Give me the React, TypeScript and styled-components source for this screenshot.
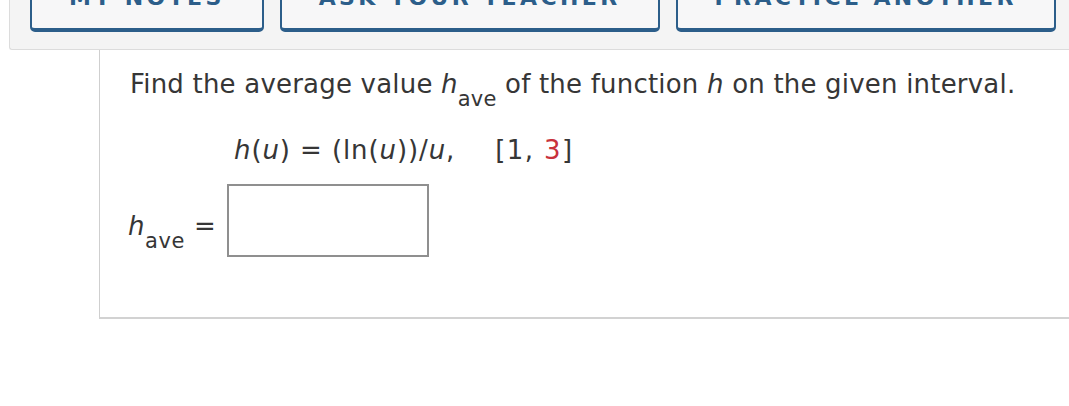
import styled, { createGlobalStyle } from "styled-components";

const GlobalStyle = createGlobalStyle`
  html, body {
    margin: 0;
    padding: 0;
    background: #ffffff;
    overflow: hidden;
  }
  body {
    font-family: "DejaVu Sans", Verdana, sans-serif;
    color: #363636;
  }
`;

const Page = styled.div`
  margin-top: -53px;
  padding-left: 9px;
  width: 1200px;
`;

const Toolbar = styled.div`
  display: flex;
  gap: 16px;
  padding: 16px 0 17px 20px;
  background: #f4f4f4;
  border-left: 1px solid #dcdcdc;
  border-bottom: 1px solid #dcdcdc;
  border-bottom-left-radius: 3px;
`;

const ToolButton = styled.button`
  font-family: "DejaVu Sans", Verdana, sans-serif;
  font-weight: bold;
  font-size: 22px;
  line-height: 26px;
  letter-spacing: 3.4px;
  text-transform: uppercase;
  color: #2c5e8a;
  background: #f7f7f8;
  border: 2px solid #2c5e8a;
  border-bottom-width: 4px;
  border-radius: 5px;
  padding: 20px 37px 17px;
  white-space: nowrap;
`;

const QuestionPanel = styled.div`
  margin-left: 90px;
  padding: 17px 0 60px 30px;
  border-left: 1px solid #cfcfcf;
  border-bottom: 2px solid #d2d2d2;
  box-shadow: 0 1px 0 #f2f2f2;
`;

const Prompt = styled.p`
  margin: 0;
  font-size: 26px;
  line-height: 34px;
  letter-spacing: 0.2px;
  white-space: nowrap;
`;

const Equation = styled(Prompt)`
  margin-top: 32px;
  padding-left: 104px;
  letter-spacing: 0.9px;
`;

const Var = styled.i`
  font-style: italic;
`;

const Sub = styled.span`
  font-size: 21px;
  line-height: 0;
  vertical-align: -13px;
`;

const Interval = styled.span`
  margin-left: 40px;
  letter-spacing: 1.4px;
`;

const Red = styled.span`
  color: #c8323c;
`;

const AnswerRow = styled.div`
  display: flex;
  align-items: flex-start;
  margin-top: 17px;
  margin-left: -2px;
`;

const AnswerLabel = styled.span`
  margin-top: 25px;
  font-size: 26px;
  line-height: 34px;
  letter-spacing: 0.6px;
  white-space: pre;
`;

const AnswerBox = styled.div`
  margin-left: 11px;
  width: 198px;
  height: 69px;
  border: 2px solid #8f8f8f;
  background: #ffffff;
`;

export default function App() {
  return (
    <>
      <GlobalStyle />
      <Page>
        <Toolbar>
          <ToolButton>My Notes</ToolButton>
          <ToolButton>Ask Your Teacher</ToolButton>
          <ToolButton>Practice Another</ToolButton>
        </Toolbar>
        <QuestionPanel>
          <Prompt>
            Find the average value <Var>h</Var>
            <Sub>ave</Sub> of the function <Var>h</Var> on the given interval.
          </Prompt>
          <Equation>
            <Var>h</Var>(<Var>u</Var>) = (ln(<Var>u</Var>))/<Var>u</Var>,
            <Interval>
              [1, <Red>3</Red>]
            </Interval>
          </Equation>
          <AnswerRow>
            <AnswerLabel>
              <Var>h</Var>
              <Sub>ave</Sub> =
            </AnswerLabel>
            <AnswerBox />
          </AnswerRow>
        </QuestionPanel>
      </Page>
    </>
  );
}
